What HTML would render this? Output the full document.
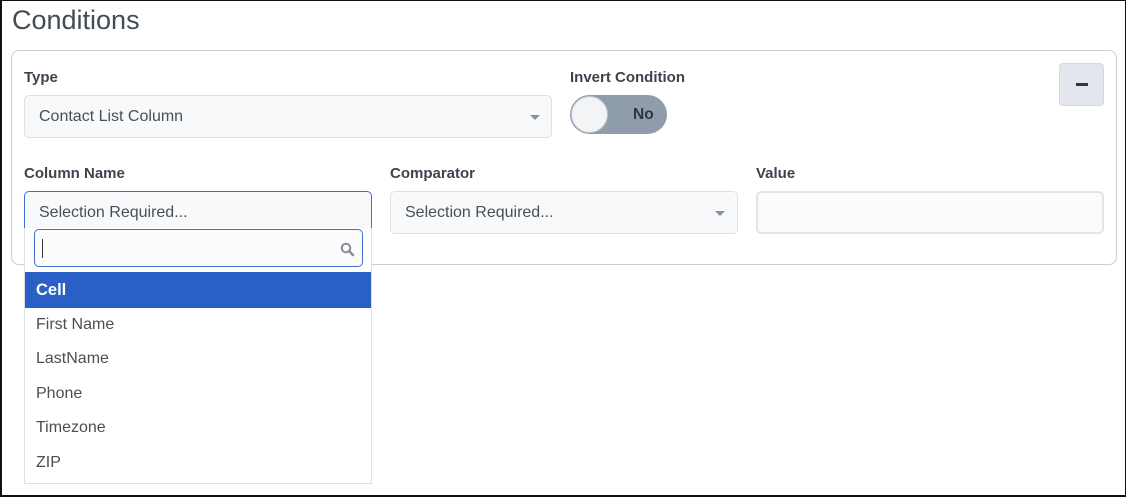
<!DOCTYPE html>
<html><head><style>
*{box-sizing:border-box;margin:0;padding:0}
body{width:1126px;height:497px;background:#fff;font-family:"Liberation Sans",sans-serif;position:relative;overflow:hidden;color:#3d444d}
.frame{position:absolute;left:0;top:0;width:1126px;height:497px;border:2px solid #111;border-top:1px solid #111;border-right:1px solid #111}
.a{position:absolute}
.lbl{font-weight:bold;font-size:15px;color:#3d444d}
.sel{background:#f8f9fa;border:1px solid #dde1e6;border-radius:5px;font-size:16px;color:#4a4f55;padding-left:14px;line-height:41px}
.car{position:absolute;width:0;height:0;border-left:5px solid transparent;border-right:5px solid transparent;border-top:5px solid #8a9099}
.it{position:absolute;left:36px;font-size:16px;color:#4a4f55}
</style></head><body>
<div class="frame"></div>
<div class="a" style="left:12px;top:5px;font-size:27px;color:#444b55">Conditions</div>
<div class="a" style="left:11px;top:50px;width:1106px;height:215px;border:1px solid #c8ced6;border-radius:8px"></div>
<div class="a lbl" style="left:24px;top:69px">Type</div>
<div class="a sel" style="left:24px;top:95px;width:528px;height:43px">Contact List Column<div class="car" style="left:505px;top:19px"></div></div>
<div class="a lbl" style="left:570px;top:69px">Invert Condition</div>
<div class="a" style="left:570px;top:95px;width:97px;height:39px;border-radius:20px;background:#8f9cab"><div style="position:absolute;left:1px;top:1px;width:37px;height:37px;border-radius:50%;background:#f3f4f5;border:1px solid #c0c6cd"></div><div style="position:absolute;left:63px;top:11px;font-weight:bold;font-size:15.5px;color:#2e3640">No</div></div>
<div class="a" style="left:1059px;top:63px;width:45px;height:43px;background:#e3e7ed;border:1px solid #d4d9e0;border-radius:4px"><div style="position:absolute;left:16px;top:19px;width:12px;height:3px;background:#2e3640"></div></div>
<div class="a lbl" style="left:24px;top:165px">Column Name</div>
<div class="a lbl" style="left:390px;top:165px">Comparator</div>
<div class="a lbl" style="left:756px;top:165px">Value</div>
<div class="a sel" style="left:390px;top:191px;width:348px;height:43px">Selection Required...<div class="car" style="left:324px;top:19px"></div></div>
<div class="a" style="left:756px;top:191px;width:348px;height:43px;background:#fbfbfc;border:2px solid #e1e4e8;border-radius:5px"></div>
<div class="a sel" style="left:24px;top:191px;width:348px;height:45px;border:1px solid #3d6fd6;border-bottom:none;border-radius:5px 5px 0 0;line-height:41px">Selection Required...</div>
<div class="a" style="left:24px;top:228px;width:348px;height:256px;background:#fff;border:1px solid #dde1e6;border-top:none"></div>
<div class="a" style="left:34px;top:229px;width:329px;height:38px;border:1px solid #3d6fd6;border-radius:5px;background:#fcfcfd"><div style="position:absolute;left:7px;top:9px;width:1px;height:19px;background:#333"></div>
<svg style="position:absolute;left:305px;top:12px" width="15" height="15" viewBox="0 0 15 15"><circle cx="6" cy="6" r="4.3" fill="none" stroke="#8a9099" stroke-width="2"/><path d="M9 9L13 13" stroke="#8a9099" stroke-width="2.6" stroke-linecap="round"/></svg></div>
<div class="a" style="left:25px;top:272px;width:346px;height:36px;background:#2a5fc6"></div>
<div class="it" style="top:281px;color:#fff;font-weight:bold;font-size:16.5px">Cell</div>
<div class="it" style="top:316px">First Name</div>
<div class="it" style="top:350px">LastName</div>
<div class="it" style="top:385px">Phone</div>
<div class="it" style="top:419px">Timezone</div>
<div class="it" style="top:454px">ZIP</div>
</body></html>
